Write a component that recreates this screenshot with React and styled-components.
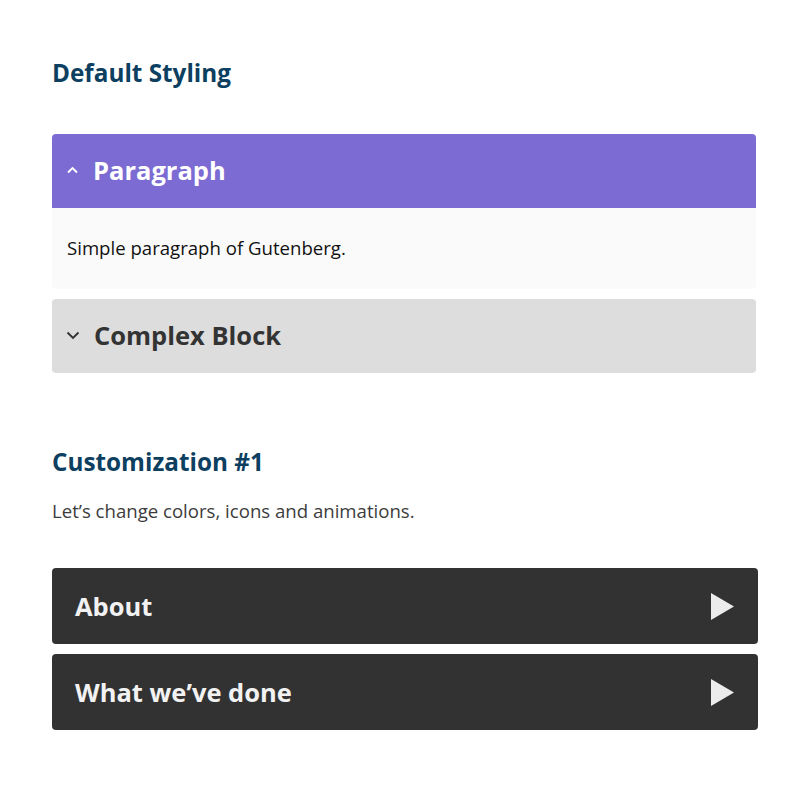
import styled, { createGlobalStyle } from 'styled-components';

const Global = createGlobalStyle`
    *, *::before, *::after {
        box-sizing: border-box;
    }
    body {
        margin: 0;
        background: #ffffff;
        font-family: "Open Sans", "Lato", sans-serif;
    }
`

// 위/아래 화살표 (열림 상태에 따라)
function Chevron({ up }) {
    return up
        ? <svg width="13" height="8" viewBox="0 0 13 8">
            <path d="M2 6.5 L6.5 2 L11 6.5" fill="none" stroke="currentColor" strokeWidth="1.9" />
        </svg>
        : <svg width="14" height="9" viewBox="0 0 14 9">
            <path d="M1.5 1.5 L7 7 L12.5 1.5" fill="none" stroke="currentColor" strokeWidth="1.9" />
        </svg>
}

function Play() {
    return <svg width="23" height="27" viewBox="0 0 23 27">
        <polygon points="0,0 23,13.5 0,27" fill="#ececec" />
    </svg>
}

function App() {
    return <Page>
        <Global />
        <Heading>Default Styling</Heading>
        <Group>
            <Item>
                <Toggle isOpen>
                    <Icon><Chevron up /></Icon>
                    Paragraph
                </Toggle>
                <Body>Simple paragraph of Gutenberg.</Body>
            </Item>
            <Item>
                <Toggle>
                    <Icon><Chevron /></Icon>
                    Complex Block
                </Toggle>
            </Item>
        </Group>

        <Heading second>Customization #1</Heading>
        <Lead>Let’s change colors, icons and animations.</Lead>
        <DarkGroup>
            <DarkToggle>About<Play /></DarkToggle>
            <DarkToggle>What we’ve done<Play /></DarkToggle>
        </DarkGroup>
    </Page>
}
export default App

const Page = styled.div`
    padding: 58px 48px 60px 52px;
    display: flex;
    flex-direction: column;
`

// 섹션 제목
const Heading = styled.h2`
    margin: ${(props) => props.second ? '74px 0 0' : '0'};
    font-size: 24.3px;
    line-height: 30px;
    font-weight: 700;
    color: #0d3f61;
`

const Group = styled.div`
    margin-top: 46px;
    width: 704px;
    display: flex;
    flex-direction: column;
    gap: 10px;
`

const Item = styled.div`
    display: flex;
    flex-direction: column;
`

const Toggle = styled.div`
    height: 74px;
    padding: 0 14px 2px;
    display: flex;
    align-items: center;
    gap: 14px;
    border-radius: 4px;
    ${(props) => props.isOpen && 'border-bottom-left-radius: 0; border-bottom-right-radius: 0;'}
    background-color: ${(props) => props.isOpen ? '#7b6bd3' : '#dddddd'};
    color: ${(props) => props.isOpen ? '#ffffff' : '#333333'};
    font-size: 25.5px;
    font-weight: 700;
`

const Icon = styled.span`
    display: flex;
    align-items: center;
`

const Body = styled.div`
    height: 81px;
    padding: 0 15px 3px;
    display: flex;
    align-items: center;
    background: #fafafa;
    border-radius: 0 0 4px 4px;
    font-size: 18.6px;
    color: #111111;
`

const Lead = styled.p`
    margin: 20px 0 0;
    font-size: 18.6px;
    line-height: 28px;
    color: #3c3c3c;
`

const DarkGroup = styled.div`
    margin-top: 43px;
    width: 706px;
    display: flex;
    flex-direction: column;
    gap: 10px;
`

const DarkToggle = styled.div`
    height: 76px;
    padding: 0 24px 0 23px;
    display: flex;
    align-items: center;
    justify-content: space-between;
    background: #323232;
    border-radius: 4px;
    color: #f2f2f2;
    font-size: 25.5px;
    font-weight: 700;
`
